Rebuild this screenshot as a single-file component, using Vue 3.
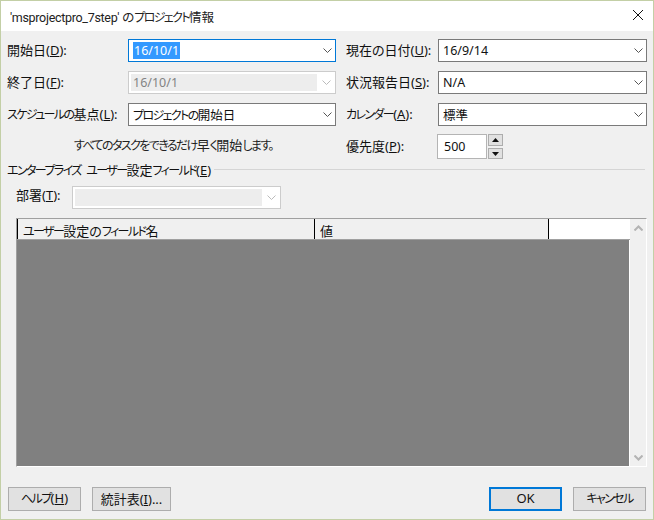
<script setup>
const rightFields = [
  { label: '現在の日付', key: 'U', value: '16/9/14' },
  { label: '状況報告日', key: 'S', value: 'N/A' },
]
</script>

<template>
  <div class="dialog">
    <header class="titlebar">
      <span class="title"><span class="latin">'msprojectpro_7step'</span> の<span class="k">プロジェクト</span>情報</span>
      <svg class="close" width="12" height="12" viewBox="0 0 12 12">
        <path d="M1 1 L11 11 M11 1 L1 11" stroke="#111" stroke-width="1" fill="none" />
      </svg>
    </header>

    <div class="content">
      <div class="form">
        <label class="lbl">開始日(<u>D</u>):</label>
        <div class="combo focus">
          <span class="val"><span class="selected">16/10/1</span></span>
          <svg class="chev" width="9" height="5" viewBox="0 0 9 5"><path d="M0.5 0.5 L4.5 4.5 L8.5 0.5" /></svg>
        </div>
        <label class="lbl second">{{ rightFields[0].label }}(<u>{{ rightFields[0].key }}</u>):</label>
        <div class="combo">
          <span class="val">{{ rightFields[0].value }}</span>
          <svg class="chev" width="9" height="5" viewBox="0 0 9 5"><path d="M0.5 0.5 L4.5 4.5 L8.5 0.5" /></svg>
        </div>

        <label class="lbl">終了日(<u>F</u>):</label>
        <div class="combo disabled">
          <span class="inner">16/10/1</span>
          <svg class="chev" width="9" height="5" viewBox="0 0 9 5"><path d="M0.5 0.5 L4.5 4.5 L8.5 0.5" /></svg>
        </div>
        <label class="lbl second">{{ rightFields[1].label }}(<u>{{ rightFields[1].key }}</u>):</label>
        <div class="combo">
          <span class="val">{{ rightFields[1].value }}</span>
          <svg class="chev" width="9" height="5" viewBox="0 0 9 5"><path d="M0.5 0.5 L4.5 4.5 L8.5 0.5" /></svg>
        </div>

        <label class="lbl"><span class="k">スケジュールの</span>基点(<u>L</u>):</label>
        <div class="combo">
          <span class="val"><span class="k">プロジェクトの</span>開始日</span>
          <svg class="chev" width="9" height="5" viewBox="0 0 9 5"><path d="M0.5 0.5 L4.5 4.5 L8.5 0.5" /></svg>
        </div>
        <label class="lbl second"><span class="k">カレンダー</span>(<u>A</u>):</label>
        <div class="combo">
          <span class="val">標準</span>
          <svg class="chev" width="9" height="5" viewBox="0 0 9 5"><path d="M0.5 0.5 L4.5 4.5 L8.5 0.5" /></svg>
        </div>

        <p class="hint"><span class="k">すべてのタスクをできるだけ</span>早<span class="k">く</span>開始<span class="k">します。</span></p>
        <label class="lbl second prio">優先度(<u>P</u>):</label>
        <div class="spinner">
          <div class="spin-input">500</div>
          <div class="spin-btns">
            <button class="spin-btn up"><svg width="7" height="4" viewBox="0 0 7 4"><path d="M3.5 0 L7 4 L0 4 Z" /></svg></button>
            <button class="spin-btn down"><svg width="7" height="4" viewBox="0 0 7 4"><path d="M0 0 L7 0 L3.5 4 Z" /></svg></button>
          </div>
        </div>
      </div>

      <div class="group-head">
        <span><span class="k spaced">エンタープライズ ユーザー</span>設定<span class="k">フィールド</span>(<u>E</u>)</span>
        <span class="rule"></span>
      </div>

      <div class="dept">
        <label class="dept-lbl">部署(<u>T</u>):</label>
        <div class="combo disabled dept-combo">
          <span class="inner"></span>
          <svg class="chev" width="9" height="5" viewBox="0 0 9 5"><path d="M0.5 0.5 L4.5 4.5 L8.5 0.5" /></svg>
        </div>
      </div>

      <div class="table">
        <div class="table-main">
          <div class="thead">
            <div class="th name"><span class="k">ユーザー</span>設定の<span class="k">フィールド</span>名</div>
            <div class="th value">値</div>
            <div class="th-rest"></div>
          </div>
          <div class="tbody"></div>
        </div>
        <div class="scrollbar">
          <svg width="9" height="6" viewBox="0 0 9 6"><path d="M0.5 5.5 L4.5 1.5 L8.5 5.5" /></svg>
          <svg width="9" height="6" viewBox="0 0 9 6"><path d="M0.5 0.5 L4.5 4.5 L8.5 0.5" /></svg>
        </div>
      </div>

      <footer class="footer">
        <button class="btn help"><span class="k">ヘルプ</span>(<u>H</u>)</button>
        <button class="btn stats">統計表(<u>I</u>)...</button>
        <span class="spacer"></span>
        <button class="btn ok">OK</button>
        <button class="btn cancel"><span class="k">キャンセル</span></button>
      </footer>
    </div>
  </div>
</template>

<style>
html, body {
  margin: 0;
  padding: 0;
}
</style>

<style scoped>
.dialog {
  width: 654px;
  height: 520px;
  box-sizing: border-box;
  border: 1px solid #c3cfa6;
  display: flex;
  flex-direction: column;
  background: #f0f0f0;
  font-family: "Noto Sans", "Noto Sans CJK JP", sans-serif;
  font-size: 13px;
  font-feature-settings: "palt";
  color: #111;
  overflow: hidden;
}

/* kana runs: Meiryo UI draws these much narrower than Noto */
.k {
  font-size: 12px;
  letter-spacing: -1.6px;
}

.k.spaced {
  word-spacing: 4px;
}

.titlebar {
  height: 30px;
  flex: none;
  background: #fff;
  display: flex;
  align-items: center;
  justify-content: space-between;
  padding: 0 9px;
}

.title {
  font-family: Roboto, "Noto Sans CJK JP", sans-serif;
  font-size: 12.5px;
  color: #222;
}

.latin {
  letter-spacing: -0.3px;
}

.close {
  margin-bottom: 2px;
}

.content {
  flex: 1;
  display: flex;
  flex-direction: column;
  min-height: 0;
}

.form {
  display: grid;
  grid-template-columns: 121px 208px 102px 209px;
  grid-template-rows: 32px 32px 31px 25px;
  padding: 8px 0 0 6px;
  align-items: start;
}

.lbl {
  white-space: nowrap;
  line-height: 23px;
}

.second {
  padding-left: 10px;
  grid-column: 3;
}

.prio {
  line-height: 25px;
}

.combo {
  height: 23px;
  box-sizing: border-box;
  border: 1px solid #7a7a7a;
  background: #fff;
  display: flex;
  align-items: center;
  justify-content: space-between;
  padding: 0 3px;
  position: relative;
}

.combo.focus {
  border-color: #0078d7;
}

.combo.disabled {
  border-color: #cccccc;
  padding: 2px 18px 2px 2px;
}

.val {
  white-space: nowrap;
  padding-left: 1px;
  font-size: 12.5px;
}

.selected {
  background: #3399ff;
  color: #fff;
  display: inline-block;
  padding: 0 1px;
}

.inner {
  flex: 1;
  align-self: stretch;
  background: #ededed;
  color: #838383;
  padding-left: 2px;
  line-height: 17px;
  font-size: 12.5px;
}

.chev {
  fill: none;
  stroke: #555;
  stroke-width: 1;
  flex: none;
}

.combo.disabled .chev {
  stroke: #bbb;
  position: absolute;
  right: 4px;
  top: 8px;
}

.hint {
  grid-column: 1 / 3;
  margin: 0;
  padding-left: 67px;
  line-height: 23px;
  color: #222;
}

.spinner {
  display: flex;
  gap: 1px;
  align-items: flex-start;
}

.spin-input {
  width: 50px;
  height: 25px;
  box-sizing: border-box;
  border: 1px solid #b4b4b4;
  background: #fff;
  padding-left: 6px;
  line-height: 23px;
  margin-left: -1px;
  font-size: 12.5px;
}

.spin-btns {
  display: flex;
  flex-direction: column;
  gap: 2px;
}

.spin-btn {
  width: 15px;
  height: 12px;
  padding: 0;
  border: 1px solid #adadad;
  background: #e1e1e1;
  display: flex;
  align-items: center;
  justify-content: center;
}

.spin-btn.down {
  height: 11px;
}

.spin-btn path {
  fill: #111;
}

.group-head {
  display: flex;
  align-items: center;
  gap: 3px;
  margin: 1px 8px 0 6px;
  height: 18px;
  white-space: nowrap;
}

.rule {
  flex: 1;
  height: 1px;
  margin-top: 1px;
  background: #d5d5d5;
}

.dept {
  display: flex;
  align-items: center;
  padding-left: 15px;
  margin-top: 7px;
}

.dept-lbl {
  width: 56px;
  flex: none;
  padding-bottom: 5px;
}

.dept-combo {
  width: 209px;
}

.table {
  margin: 9px 6px 0 15px;
  height: 249px;
  flex: none;
  box-sizing: border-box;
  border-top: 1px solid #a0a0a0;
  border-left: 1px solid #a0a0a0;
  border-right: 1px solid #fff;
  border-bottom: 1px solid #fff;
  display: flex;
}

.table-main {
  flex: 1;
  display: flex;
  flex-direction: column;
  min-width: 0;
  background: #fff;
}

.thead {
  height: 20px;
  flex: none;
  display: flex;
  border-bottom: 1px solid #a0a0a0;
}

.th {
  box-sizing: border-box;
  border-left: 1px solid #000;
  padding-left: 5px;
  line-height: 24px;
  height: 20px;
  overflow: hidden;
  white-space: nowrap;
  background: #f0f0f0;
}

.th.name {
  width: 297px;
}

.th.value {
  width: 234px;
}

.th-rest {
  flex: 1;
  background: #fff;
  border-left: 1px solid #000;
}

.tbody {
  flex: 1;
  background: #808080;
  margin-right: 1px;
}

.scrollbar {
  width: 16px;
  flex: none;
  background: #f0f0f0;
  display: flex;
  flex-direction: column;
  align-items: center;
  justify-content: space-between;
  padding: 6px 0 5px;
  box-sizing: border-box;
}

.scrollbar path {
  fill: none;
  stroke: #b4b4b4;
  stroke-width: 2;
}

.footer {
  display: flex;
  align-items: center;
  padding: 20px 7px 0;
}

.spacer {
  flex: 1;
}

.btn {
  height: 24px;
  box-sizing: border-box;
  border: 1px solid #adadad;
  background: #e1e1e1;
  font: inherit;
  font-feature-settings: "palt";
  color: #111;
  padding: 0 0 2px;
  width: 73px;
}

.stats {
  width: 79px;
  margin-left: 11px;
}

.ok {
  border: 2px solid #0078d7;
}

.cancel {
  margin-left: 11px;
}
</style>
